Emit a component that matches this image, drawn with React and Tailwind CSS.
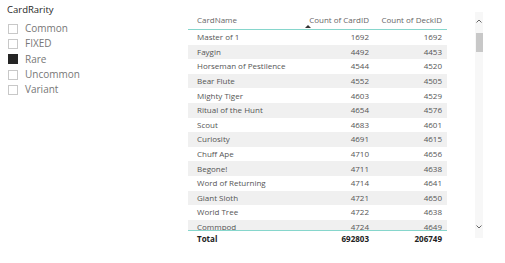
import React from 'react';

const rarities = [
  { label: 'Common', checked: false },
  { label: 'FIXED', checked: false },
  { label: 'Rare', checked: true },
  { label: 'Uncommon', checked: false },
  { label: 'Variant', checked: false },
];

const rows = [
  ['Master of 1', 1692, 1692],
  ['Faygin', 4492, 4453],
  ['Horseman of Pestilence', 4544, 4520],
  ['Bear Flute', 4552, 4505],
  ['Mighty Tiger', 4603, 4529],
  ['Ritual of the Hunt', 4654, 4576],
  ['Scout', 4683, 4601],
  ['Curiosity', 4691, 4615],
  ['Chuff Ape', 4710, 4656],
  ['Begone!', 4711, 4638],
  ['Word of Returning', 4714, 4641],
  ['Giant Sloth', 4721, 4650],
  ['World Tree', 4722, 4638],
  ['Commpod', 4724, 4649],
];

const Slicer = () => (
  <div className="w-[188px] pl-[7px] pt-[3px]">
    <div className="text-[9.5px] leading-[14px] text-[#252525]">CardRarity</div>
    <div className="mt-[4px] flex flex-col">
      {rarities.map((r) => (
        <div key={r.label} className="flex items-center h-[15.3px]">
          <span
            className={
              r.checked
                ? 'w-[10px] h-[10px] ml-[1px] bg-[#252525] border border-[#252525]'
                : 'w-[10px] h-[10px] ml-[1px] bg-white border border-[#c8c8c8]'
            }
          />
          <span className="ml-[7px] text-[10px] text-[#777]">{r.label}</span>
        </div>
      ))}
    </div>
  </div>
);

const DataTable = () => (
  <div className="w-[259px] flex flex-col pt-[12px] text-[8px]">
    <div className="grid grid-cols-[110px_76px_73px] h-[18px] border-b border-[#86d6cc] text-[#666]">
      <div className="pl-[9px] pt-[2px]">CardName</div>
      <div className="relative text-right pr-[5px] pt-[2px]">
        Count of CardID
        <span className="absolute left-[7px] top-[13px] w-0 h-0 border-l-[3px] border-r-[3px] border-b-[3px] border-l-transparent border-r-transparent border-b-[#333]" />
      </div>
      <div className="text-right pr-[5px] pt-[2px]">Count of DeckID</div>
    </div>
    <div className="h-[201px] overflow-hidden border-b border-[#86d6cc]">
      {rows.map(([name, a, b], i) => (
        <div
          key={name}
          className={
            i % 2 === 1
              ? 'grid grid-cols-[110px_76px_73px] h-[14.6px] items-center bg-[#f0f0f0] text-[#555]'
              : 'grid grid-cols-[110px_76px_73px] h-[14.6px] items-center bg-white text-[#555]'
          }
        >
          <div className="pl-[9px] whitespace-nowrap">{name}</div>
          <div className="text-right pr-[5px]">{a}</div>
          <div className="text-right pr-[5px]">{b}</div>
        </div>
      ))}
    </div>
    <div className="grid grid-cols-[110px_76px_73px] h-[15px] items-center font-bold text-[#222]">
      <div className="pl-[9px]">Total</div>
      <div className="text-right pr-[5px]">692803</div>
      <div className="text-right pr-[5px]">206749</div>
    </div>
  </div>
);

const ScrollBar = () => (
  <div className="ml-[28px] mt-[12px] w-[8px] h-[226px] bg-[#f7f7f7] flex flex-col items-center">
    <svg width="6" height="4" viewBox="0 0 6 4" className="mt-[7px]">
      <path d="M0.5 3.5 L3 1 L5.5 3.5" fill="none" stroke="#666" strokeWidth="1" />
    </svg>
    <div className="mt-[10px] w-[7px] h-[19px] bg-[#c8c8c8]" />
    <div className="flex-1" />
    <svg width="6" height="4" viewBox="0 0 6 4" className="mb-[9px]">
      <path d="M0.5 0.5 L3 3 L5.5 0.5" fill="none" stroke="#666" strokeWidth="1" />
    </svg>
  </div>
);

export default function App() {
  return (
    <div className="flex w-[505px] h-[263px] bg-white overflow-hidden font-['Open_Sans',sans-serif]">
      <Slicer />
      <DataTable />
      <ScrollBar />
    </div>
  );
}
